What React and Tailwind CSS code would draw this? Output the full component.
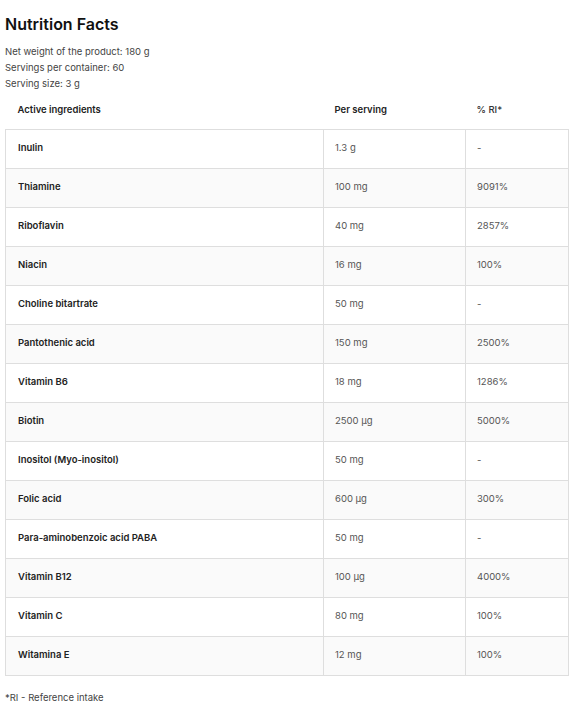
const rows = [
  ['Inulin', '1.3 g', '-'],
  ['Thiamine', '100 mg', '9091%'],
  ['Riboflavin', '40 mg', '2857%'],
  ['Niacin', '16 mg', '100%'],
  ['Choline bitartrate', '50 mg', '-'],
  ['Pantothenic acid', '150 mg', '2500%'],
  ['Vitamin B6', '18 mg', '1286%'],
  ['Biotin', '2500 µg', '5000%'],
  ['Inositol (Myo-inositol)', '50 mg', '-'],
  ['Folic acid', '600 µg', '300%'],
  ['Para-aminobenzoic acid PABA', '50 mg', '-'],
  ['Vitamin B12', '100 µg', '4000%'],
  ['Vitamin C', '80 mg', '100%'],
  ['Witamina E', '12 mg', '100%'],
];

export default function App() {
  return (
    <div className="w-[580px] h-[720px] bg-white pl-[5px] pr-[11px] pt-[12px] font-['Inter',sans-serif] text-[#222]">
      <h2 className="text-[16px] leading-[24px] font-semibold text-[#111]">Nutrition Facts</h2>
      <div className="mt-[8px] text-[9.5px] leading-[16px] text-[#444]">
        <p>Net weight of the product: 180 g</p>
        <p>Servings per container: 60</p>
        <p>Serving size: 3 g</p>
      </div>
      <table className="w-full border-collapse text-[9.5px]">
        <thead>
          <tr className="h-[37px] text-left">
            <th className="pl-3 font-semibold text-[#222]">Active ingredients</th>
            <th className="pl-[11px] font-semibold text-[#222]">Per serving</th>
            <th className="pl-[11px] font-medium text-[#333]">% RI*</th>
          </tr>
        </thead>
        <tbody>
          {rows.map((r, i) => (
            <tr key={r[0]} className={`h-[39px] ${i % 2 ? 'bg-[#fafafa]' : 'bg-white'}`}>
              <td className="w-[318px] border border-[#dedede] pl-3 font-semibold text-[#222]">{r[0]}</td>
              <td className="w-[142px] border border-[#dedede] pl-[11px] text-[#555]">{r[1]}</td>
              <td className="border border-[#dedede] pl-[11px] text-[#555]">{r[2]}</td>
            </tr>
          ))}
        </tbody>
      </table>
      <p className="mt-[15px] text-[9.5px] text-[#444]">*RI - Reference intake</p>
    </div>
  );
}
